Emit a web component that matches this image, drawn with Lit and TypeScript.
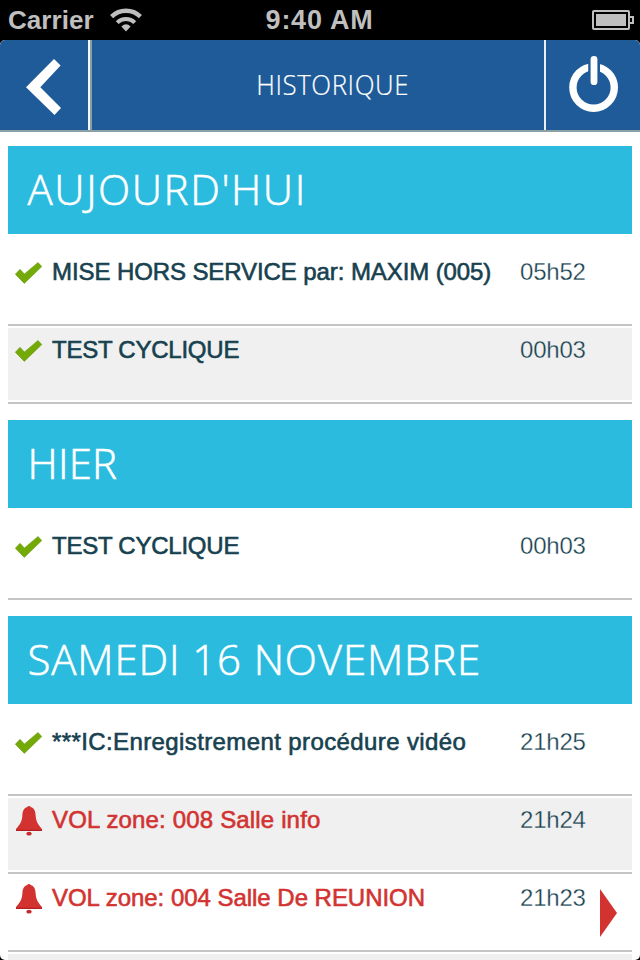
import { LitElement, html, css, svg } from "lit";
import { customElement, property } from "lit/decorators.js";
import { classMap } from "lit/directives/class-map.js";
import { styleMap } from "lit/directives/style-map.js";

interface Entry {
  kind: "ok" | "alarm";
  label: string;
  time: string;
  tracking?: number;
  more?: boolean;
}
interface Day {
  title: string;
  tracking: number;
  entries: Entry[];
}

const days: Day[] = [
  {
    title: "AUJOURD'HUI",
    tracking: 1.6,
    entries: [
      { kind: "ok", label: "MISE HORS SERVICE par: MAXIM (005)", time: "05h52", tracking: -0.09 },
      { kind: "ok", label: "TEST CYCLIQUE", time: "00h03", tracking: -0.24 },
    ],
  },
  {
    title: "HIER",
    tracking: 0.2,
    entries: [{ kind: "ok", label: "TEST CYCLIQUE", time: "00h03", tracking: -0.24 }],
  },
  {
    title: "SAMEDI 16 NOVEMBRE",
    tracking: 0.86,
    entries: [
      { kind: "ok", label: "***IC:Enregistrement procédure vidéo", time: "21h25", tracking: 0.39 },
      { kind: "alarm", label: "VOL zone: 008 Salle info", time: "21h24", tracking: 0.16 },
      { kind: "alarm", label: "VOL zone: 004 Salle De REUNION", time: "21h23", tracking: -0.03, more: true },
      { kind: "alarm", label: "", time: "" },
    ],
  },
];

const check = svg`<path d="M15.3 26.2 L20 21.3 L24.4 26 L38 14.4 L41.8 18.6 L24.3 35.4 Z" fill="#74aa08" stroke="#5f9400" stroke-width=".5"/>`;
const bell = svg`
  <path d="M27.3 11 Q27.6 10 29 10 Q30.4 10 30.7 11 C34.2 12 35.4 15 35.6 19 C35.9 25 37.6 28 42 33 V35 H16 V33 C20.4 28 22.1 25 22.4 19 C22.6 15 23.8 12 27.3 11Z" fill="#d23331"/>
  <path d="M16 34.4H42" stroke="#b51f22" stroke-width="1.2"/>
  <ellipse cx="29" cy="37.7" rx="2.7" ry="1.9" fill="#c92a2a"/>`;

@customElement("status-bar")
class StatusBar extends LitElement {
  static styles = css`
    :host {
      display: grid;
      grid-template-columns: 1fr auto 1fr;
      align-items: center;
      height: 40px;
      background: #000;
      color: #bfbfbf;
      font: bold 26px/40px "Liberation Sans", Arial, sans-serif;
    }
    .left { display: flex; align-items: center; padding-left: 8px; gap: 16px; }
    .carrier { letter-spacing: 0.05px; }
    .time { font-size: 27px; letter-spacing: 0.75px; padding-right: 1px; }
    .battery { justify-self: end; margin-right: 6px; }
    svg { display: block; }
  `;
  render() {
    return html`
      <div class="left">
        <span class="carrier">Carrier</span>
        <svg width="32" height="24" viewBox="0 0 32 24">
          <g fill="none" stroke="#bfbfbf">
            <path d="M1.6 8.6 A20.6 20.6 0 0 1 30.4 8.6" stroke-width="4.4" />
            <path d="M7.2 14.6 A12.6 12.6 0 0 1 24.8 14.6" stroke-width="4" />
          </g>
          <path d="M11.4 18.6 Q16 14 20.6 18.6 L16 23.4Z" fill="#bfbfbf" />
        </svg>
      </div>
      <span class="time">9:40 AM</span>
      <svg class="battery" width="42" height="20" viewBox="0 0 42 20">
        <rect x="1" y="1" width="36" height="18" rx="1" fill="none" stroke="#bfbfbf" stroke-width="2" />
        <rect x="4" y="4" width="30" height="12" fill="#bfbfbf" />
        <path d="M38 7H41V13H38" fill="none" stroke="#bfbfbf" stroke-width="2" />
      </svg>
    `;
  }
}

@customElement("nav-header")
class NavHeader extends LitElement {
  static styles = css`
    :host {
      display: flex;
      box-sizing: border-box;
      height: 92px;
      background: #1e5b98;
      border-bottom: 2px solid #8ba0a4;
      border-radius: 5px 5px 0 0;
      color: #fff;
    }
    .back { width: 88px; border-right: 2px solid #f4f8fb; }
    .title {
      flex: 1;
      border-left: 2px solid #8ba0a4;
      text-align: center;
      font: 300 28px/88px "Open Sans", "Noto Sans", sans-serif;
      letter-spacing: 0.6px;
      padding-left: 30px;
    }
    .title span {
      display: inline-block;
      transform: scaleX(0.925);
      -webkit-text-stroke: 0.2px currentColor;
    }
    .power { width: 94px; border-left: 2px solid #e9eff5; }
    svg { display: block; }
  `;
  render() {
    return html`
      <div class="back">
        <svg width="88" height="90" viewBox="0 0 88 90">
          <path d="M26 47.3 L54 19 L60.6 25.5 L40.3 47.3 L61 68 L54.5 75Z" fill="#fff" />
        </svg>
      </div>
      <div class="title"><span>HISTORIQUE</span></div>
      <div class="power">
        <svg width="94" height="90" viewBox="0 0 94 90">
          <circle cx="47.6" cy="47.6" r="20.7" fill="none" stroke="#fff" stroke-width="7.4" />
          <rect x="42.2" y="15" width="11.8" height="19" fill="#1e5b98" />
          <path d="M48 19.3V41.7" stroke="#fff" stroke-width="6.8" stroke-linecap="round" />
        </svg>
      </div>
    `;
  }
}

@customElement("day-section")
class DaySection extends LitElement {
  @property({ attribute: false }) day!: Day;
  static styles = css`
    :host { display: block; }
    .heading {
      height: 88px;
      margin-bottom: 14px;
      padding-left: 19.5px;
      background: #2abbde;
      color: #fff;
      font: 300 42px/86px "Open Sans", "Noto Sans", sans-serif;
      -webkit-text-stroke: 0.6px currentColor;
      white-space: nowrap;
    }
    .row {
      display: grid;
      grid-template-columns: 44px 468px 80px 32px;
      height: 72px;
      padding: 2px 0;
      border-bottom: 2px solid #c4c4c4;
      font: 24px/27px "Liberation Sans", Arial, sans-serif;
      color: #17414f;
      --ground: #fff;
      background: var(--ground) content-box;
    }
    .shaded { --ground: #f0f0f0; }
    .label {
      padding-top: 8px;
      white-space: nowrap;
      -webkit-text-stroke: 0.6px currentColor;
    }
    .alarm .label { color: #d23331; }
    .time {
      padding-top: 8px;
      letter-spacing: -0.2px;
      -webkit-text-stroke: 0.3px var(--ground);
    }
    svg { display: block; }
    .icon { margin: -2px 0 0 -8px; }
    .more { margin-top: 13px; }
  `;
  render() {
    return html`
      <div class="heading" style=${styleMap({ letterSpacing: `${this.day.tracking}px` })}>${this.day.title}</div>
      ${this.day.entries.map(
        (e, i) => html`
          <div class=${classMap({ row: true, shaded: i % 2 === 1, alarm: e.kind === "alarm" })}>
            <svg class="icon" width="52" height="48" viewBox="0 0 52 48">
              ${e.kind === "ok" ? check : bell}
            </svg>
            <span class="label" style=${styleMap({ letterSpacing: `${e.tracking ?? 0}px` })}>${e.label}</span>
            <span class="time">${e.time}</span>
            ${e.more
              ? html`<svg class="more" width="17" height="48" viewBox="0 0 17 48">
                  <path d="M0 0L17 24L0 48Z" fill="#d23331" />
                </svg>`
              : ""}
          </div>
        `
      )}
    `;
  }
}

@customElement("app-root")
class AppRoot extends LitElement {
  static styles = css`
    :host { display: block; width: 640px; height: 960px; overflow: hidden; background: #000; }
    .screen { height: 920px; overflow: hidden; background: #fff; border-radius: 5px; }
    .list { display: flex; flex-direction: column; gap: 16px; padding: 14px 8px 0; }
  `;
  render() {
    return html`
      <status-bar></status-bar>
      <div class="screen">
        <nav-header></nav-header>
        <div class="list">${days.map((d) => html`<day-section .day=${d}></day-section>`)}</div>
      </div>
    `;
  }
}
